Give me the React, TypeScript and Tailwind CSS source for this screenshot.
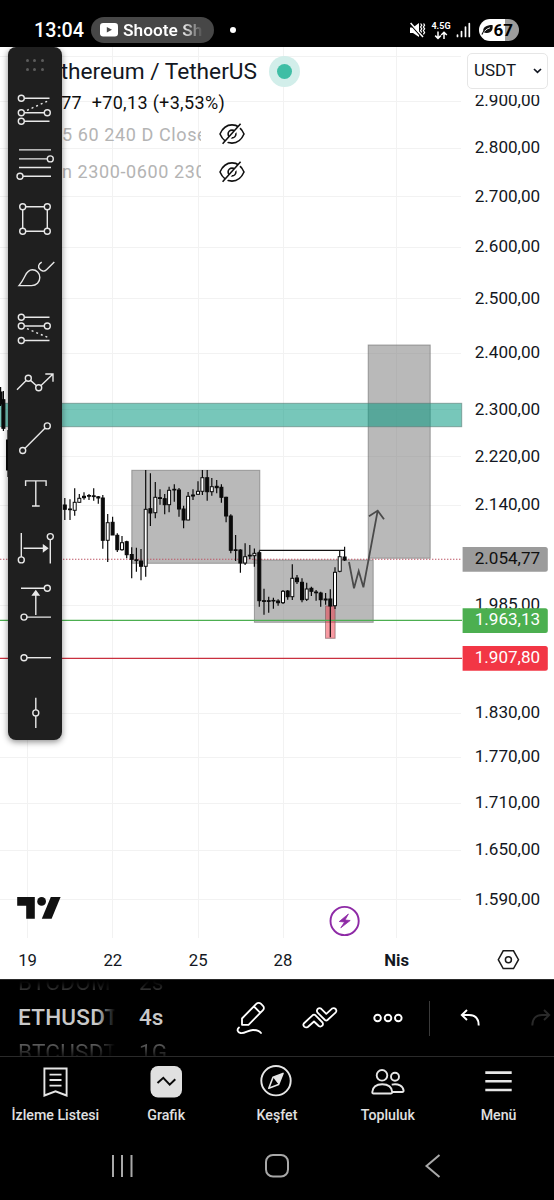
import type { ReactNode } from "react";

// [center x, high, open/close top, open/close bottom, low, rising]
type Candle = [number, number, number, number, number, boolean];

const candles: Candle[] = [
  [0.6, 387, 392, 404, 406, false],
  [3.4, 391, 399.7, 428.3, 431, false],
  [8, 430, 440, 470, 477, false],
  [64.8, 498, 505, 509.3, 520, false],
  [70, 499.3, 509, 509.7, 520, false],
  [74.7, 488.3, 502.3, 510.3, 515.7, true],
  [79.3, 494, 498.3, 502.3, 502.7, true],
  [84, 492.3, 496.3, 497.7, 499.7, false],
  [89, 494, 495.5, 496.2, 500, false],
  [93.7, 488.3, 495.8, 496.6, 500.7, false],
  [98.3, 496, 496.8, 498, 503.7, false],
  [102.8, 495, 498, 540.3, 548.7, false],
  [107.7, 514, 522.7, 540.3, 562, true],
  [112.6, 516.7, 522.3, 535, 535, false],
  [117.3, 533.3, 535.3, 549.7, 552, false],
  [122, 536, 542.7, 549.7, 550.7, true],
  [126.7, 540.7, 541.7, 554.7, 558.3, false],
  [131.7, 547.3, 554.5, 559.3, 578.3, false],
  [136.4, 547.7, 559.8, 560.6, 571.7, false],
  [141, 549, 561, 566.3, 580.3, false],
  [145.7, 470, 509.3, 566.3, 576.7, true],
  [150.4, 473.3, 508.7, 513, 526, false],
  [155.3, 482, 497.3, 512.7, 518.3, true],
  [160, 489.3, 497.7, 498.5, 504.7, false],
  [164.7, 494, 498.7, 504.7, 514.3, false],
  [169.1, 486.7, 490.3, 504.7, 512.3, true],
  [174.3, 484.3, 489.3, 490, 501.7, false],
  [179, 488, 490, 509, 516.7, false],
  [183.6, 505.7, 509, 520, 528.3, false],
  [188.1, 492, 496.3, 520, 520.3, true],
  [193, 489.3, 495, 496, 500, false],
  [198, 481.3, 491.3, 494.3, 495, true],
  [202.4, 470, 477.7, 491.3, 495, true],
  [207.2, 470, 477.7, 491.7, 500.7, false],
  [211.8, 478, 486.7, 491.7, 495.7, true],
  [216.7, 480, 486.3, 487.7, 493.3, false],
  [221.4, 484.3, 487.3, 497.3, 502.7, false],
  [226.1, 496.7, 497.3, 516, 522.3, false],
  [230.8, 514.3, 516, 550.3, 553.3, false],
  [235.6, 535, 549.8, 550.5, 561, false],
  [240.4, 549.3, 550, 563, 572.7, false],
  [245.1, 543.3, 556.7, 563, 565, true],
  [249.8, 545, 555.2, 556, 559, false],
  [254.4, 548.5, 553.3, 555.7, 566.7, true],
  [259.3, 550.7, 552.7, 600.7, 606.7, false],
  [264, 588.7, 600.7, 601.4, 614.7, false],
  [268.7, 596.7, 600.7, 601.4, 612.7, false],
  [273.4, 597.7, 600.4, 601, 608.7, false],
  [278.1, 599.3, 601, 602.7, 605.7, false],
  [283, 590, 591.3, 602.7, 604, true],
  [287.7, 590, 591, 596.7, 599.7, false],
  [292.3, 564.3, 578.3, 596.7, 600, true],
  [297, 575, 578, 581.7, 584, false],
  [302, 578.3, 582.3, 599.7, 602.3, false],
  [306.7, 582.7, 589, 599.3, 601, true],
  [311.4, 586.7, 588.3, 591.3, 596, false],
  [316.1, 590, 592, 592.8, 600.7, false],
  [320.7, 591.7, 593, 599.7, 606.7, false],
  [325.6, 593, 599, 600, 604.7, false],
  [330.3, 589.3, 599, 606, 637.3, false],
  [335, 567.3, 572.3, 605.7, 609, true],
  [339.7, 550.7, 556.7, 571.3, 572.3, true],
  [344.6, 546.7, 557, 560, 561, false],
];

const priceTicks = [
  { label: "2.900,00", y: 101.5 },
  { label: "2.800,00", y: 148.5 },
  { label: "2.700,00", y: 196.7 },
  { label: "2.600,00", y: 247 },
  { label: "2.500,00", y: 298.8 },
  { label: "2.400,00", y: 353.2 },
  { label: "2.300,00", y: 409.7 },
  { label: "2.220,00", y: 456.7 },
  { label: "2.140,00", y: 505.5 },
  { label: "1.985,00", y: 605.3 },
  { label: "1.830,00", y: 713.2 },
  { label: "1.770,00", y: 757.5 },
  { label: "1.710,00", y: 803 },
  { label: "1.650,00", y: 850.5 },
  { label: "1.590,00", y: 899.8 },
];

const priceTags = [
  { label: "2.054,77", top: 547, fill: "#9b9b9b", color: "#101010" },
  { label: "1.963,13", top: 608.3, fill: "#4caf50", color: "#ffffff" },
  { label: "1.907,80", top: 646, fill: "#f23645", color: "#ffffff" },
];

const timeTicks = [
  { label: "19", x: 27.6 },
  { label: "22", x: 112.8 },
  { label: "25", x: 198.2 },
  { label: "28", x: 283 },
  { label: "Nis", x: 396.6, bold: true },
];

function Chart() {
  return (
    <svg
      viewBox="0 47 554 932"
      width="554"
      height="932"
      className="block font-[Roboto,sans-serif] text-[17.1px]"
    >
      {/* Grid */}
      <g stroke="#f2f2f2" strokeWidth="1">
        <path d="M0 56.5H461" />
        {priceTicks.map((t) => (
          <path key={t.label} d={`M0 ${Math.floor(t.y) + 0.5}H461`} />
        ))}
        {timeTicks.map((t) => (
          <path key={t.label} d={`M${Math.floor(t.x) + 0.5} 47V938`} />
        ))}
      </g>

      {/* Range boxes */}
      <g fill="rgba(115,115,115,0.5)" stroke="rgba(100,100,100,0.55)" strokeWidth="1">
        <rect x="131.8" y="470.3" width="128" height="93" />
        <rect x="254.4" y="560" width="118.8" height="62.3" />
        <rect x="368.2" y="345" width="62" height="213.2" />
      </g>
      <rect
        x="325.5" y="606" width="9.6" height="32.3"
        fill="rgba(242,54,69,0.5)" stroke="rgba(120,90,95,0.6)"
      />
      <rect
        x="-2" y="403.3" width="463.7" height="23.4"
        fill="rgba(8,153,129,0.55)" stroke="rgba(90,120,115,0.6)"
      />

      {/* Price lines */}
      <path d="M0 559.3H462" stroke="#bd5565" strokeWidth="1.1" strokeDasharray="1.4 1.6" />
      <path d="M0 620.4H462" stroke="#4cae50" strokeWidth="1.3" />
      <path d="M0 658.3H462" stroke="#c9303f" strokeWidth="1.3" />

      {/* Candles */}
      {candles.map(([x, high, top, bottom, low, up]) => (
        <g key={x} stroke="#0a0a0a">
          <path d={`M${x} ${high}V${low}`} strokeWidth="1.2" />
          <rect
            x={x - 1.5}
            y={top}
            width="3"
            height={bottom - top}
            fill={up ? "#ffffff" : "#0a0a0a"}
            strokeWidth="1"
          />
        </g>
      ))}

      {/* Projection */}
      <path d="M259.3 550.4H344.8" stroke="#111" strokeWidth="1.3" />
      <path
        d="M349 562L354 588.3L358.7 571L363.4 587.3L377.7 510.6M369 516.2L377.7 510.6L384 519.3"
        fill="none"
        stroke="#4a4a4a"
        strokeWidth="1.8"
      />

      {/* Price scale */}
      <g fill="#131722">
        {priceTicks.map((t) => (
          <text key={t.label} x="474.7" y={t.y + 4.8}>
            {t.label}
          </text>
        ))}
      </g>
      <rect x="466" y="88" width="84" height="7" fill="#ffffff" />
      {priceTags.map((t) => (
        <g key={t.label}>
          <path
            d={`M462.6 ${t.top}H545.3Q547.8 ${t.top} 547.8 ${t.top + 2.5}V${t.top + 22.2}Q547.8 ${t.top + 24.7} 545.3 ${t.top + 24.7}H462.6Z`}
            fill={t.fill}
          />
          <text x="474.7" y={t.top + 17.1} fill={t.color}>
            {t.label}
          </text>
        </g>
      ))}

      {/* Time scale */}
      <g fill="#131722" textAnchor="middle" className="text-[16.7px]">
        {timeTicks.map((t) => (
          <text key={t.label} x={t.x} y="965.6" fontWeight={t.bold ? 700 : 400}>
            {t.label}
          </text>
        ))}
      </g>
      <g fill="none" stroke="#1a1a1a" strokeWidth="1.5">
        <path d="M503.2 950.8H513.5L518.5 959.7L513.5 968.6H503.2L498.3 959.7Z" />
        <circle cx="508.4" cy="959.7" r="3" />
      </g>

      {/* Event marker */}
      <circle cx="344.6" cy="921" r="14.1" fill="#fff" stroke="#8e2aa6" strokeWidth="1.9" />
      <path
        d="M348.4 914L339.3 921.5L344.6 922L340.8 927.8L350.2 920.5L345 920Z"
        fill="#8e2aa6"
        stroke="#8e2aa6"
        strokeWidth="0.8"
        strokeLinejoin="round"
      />

      {/* TradingView mark */}
      <g fill="#111">
        <path d="M17.2 897H34.8V918.8H26.2V905.8H17.2Z" />
        <circle cx="41.6" cy="901.4" r="4.4" />
        <path d="M50.8 897H60.6L51.6 918.8H41.8Z" />
      </g>
    </svg>
  );
}

function StatusBar() {
  return (
    <div className="flex h-[47px] items-start bg-black pt-[17px] text-white">
      <span className="ml-[34px] w-[57px] text-[19.7px] leading-[27px] font-medium">13:04</span>
      <div className="flex h-[26px] w-[123px] items-center rounded-full bg-[#474747] pl-[9px]">
        <svg width="18" height="14" viewBox="0 0 18 14">
          <rect width="18" height="13.4" rx="3.2" fill="#fff" />
          <path d="M6.8 4L12 6.8L6.8 9.6Z" fill="#474747" />
        </svg>
        <span className="ml-[5px] w-[82px] overflow-hidden bg-linear-to-r from-white from-70% to-transparent to-98% bg-clip-text text-[17.3px] leading-[28px] font-semibold whitespace-nowrap text-transparent">
          Shoote Sh
        </span>
      </div>
      <span className="mt-[10px] ml-[16px] size-[6px] rounded-full bg-white" />
      <svg className="mt-[4px] ml-[172px]" width="18" height="18" viewBox="0 0 18 18" fill="none">
        <path d="M2 6.5H5L11 2V16L5 12H2Z" fill="#fff" />
        <path d="M1.5 2.5L13.5 16" stroke="#000" strokeWidth="1.2" />
        <path d="M2.6 2L15 16" stroke="#fff" strokeWidth="1.5" />
        <path d="M12.6 2.5L13.8 4.2L12.6 6L13.8 7.8L12.6 9.6L13.8 11.4M15.6 2.5L16.6 4.2L15.4 6L16.6 7.8L15.4 9.6L16.6 11.4L15.4 13.4" stroke="#fff" strokeWidth="1.2" />
      </svg>
      <div className="mt-[4px] ml-[5px] flex w-[20px] flex-col items-center">
        <span className="text-[9px] leading-[10px] font-bold">4.5G</span>
        <svg width="14" height="9" viewBox="0 0 14 9" fill="none" stroke="#fff" strokeWidth="1.5">
          <path d="M4 0.5V7M1.2 4.6L4 7.4L6.8 4.6M10 8V1.5M7.2 4L10 1.2L12.8 4" />
        </svg>
      </div>
      <svg className="mt-[5px] ml-[5px]" width="16" height="16" viewBox="0 0 16 16" stroke="#fff" strokeWidth="1.7" strokeLinecap="round">
        <path d="M1.5 13V14.4M5.5 9.5V14.4M9.5 5V14.4M13.3 1.5V14.4" />
      </svg>
      <div className="mt-[2px] ml-[6.5px] flex h-[22px] w-[40px] items-center rounded-full bg-linear-to-r from-white from-66% to-[#9c9c9c] to-66% text-black">
        <svg className="ml-[2px]" width="13" height="12" viewBox="0 0 13 12">
          <path d="M11.5 1C12.4 5 10.5 9 6 9C4.5 9 3.4 8.6 2.8 8L1.4 10.8L0.4 10.2L2.2 7C2 3.5 5 1 11.5 1Z" fill="#111" />
          <path d="M3.4 7.4Q6 4.4 9 3.8" stroke="#fff" strokeWidth="0.9" fill="none" />
        </svg>
        <span className="text-[17px] leading-[22px] font-bold">67</span>
      </div>
    </div>
  );
}

function HiddenIcon() {
  return (
    <svg width="26" height="22" viewBox="0 0 26 22" fill="none" stroke="#111" strokeWidth="1.6">
      <path d="M1 11C3.6 5 7.8 1.9 13 1.9S22.4 5 25 11C22.4 17 18.2 20.1 13 20.1S3.6 17 1 11Z" />
      <circle cx="13" cy="11" r="3.9" />
      <path d="M22.8 1.2L4.8 21.6" stroke="#fff" strokeWidth="2.6" />
      <path d="M21.6 0.8L3.6 20.8" />
    </svg>
  );
}

function Legend() {
  return (
    <div className="absolute top-0 left-0 w-[310px] pt-[9px]">
      <div className="flex h-[31px] items-center">
        <div className="w-[257px] pt-[2px] text-right text-[22.7px] whitespace-nowrap text-[#131722]">
          Ethereum / TetherUS
        </div>
        <span className="ml-[12px] flex size-[31px] items-center justify-center rounded-full bg-[#d2eeea]">
          <span className="size-[15px] rounded-full bg-[#3fbea5]" />
        </span>
      </div>
      <div className="w-[225px] pt-px text-right text-[18px] leading-[30px] tracking-[0.33px] whitespace-pre text-[#0f0f0f]">
        {"2.054,77  +70,13 (+3,53%)"}
      </div>
      <div className="-mt-[2.5px]">
        {["5 60 240 D Close", "n 2300-0600 2300"].map((name) => (
          <div key={name} className="flex h-[37.5px] items-center">
            <div className="ml-[62px] w-[139px] overflow-hidden text-[18px] tracking-[0.6px] whitespace-nowrap text-[#b4b4b4]">
              {name}
            </div>
            <span className="ml-[18px]">
              <HiddenIcon />
            </span>
          </div>
        ))}
      </div>
    </div>
  );
}

function Dot({ x, y }: { x: number; y: number }) {
  return <circle cx={x} cy={y} r="3" />;
}

const tools: { name: string; icon: ReactNode }[] = [
  {
    name: "fib-extension",
    icon: (
      <>
        <Dot x={13.3} y={16.3} />
        <Dot x={13.3} y={30.7} />
        <Dot x={39.3} y={30.7} />
        <Dot x={13.3} y={39.3} />
        <path d="M16.3 16.3H41.5M16.3 30.7H36.3M16.3 39.3H41.5" />
        <path d="M19 28.3L40 19" strokeDasharray="2 3" />
      </>
    ),
  },
  {
    name: "fib-retracement",
    icon: (
      <>
        <Dot x={42.3} y={21.9} />
        <Dot x={12} y={39.2} />
        <path d="M11 12.9H43M11 21.9H39.3M11 30.5H43M15 39.2H43" />
      </>
    ),
  },
  {
    name: "rectangle",
    icon: (
      <>
        <Dot x={14.7} y={14.7} />
        <Dot x={39.3} y={14.7} />
        <Dot x={14.7} y={39.3} />
        <Dot x={39.3} y={39.3} />
        <path d="M17.7 14.7H36.3M17.7 39.3H36.3M14.7 17.7V36.3M39.3 17.7V36.3" />
      </>
    ),
  },
  {
    name: "brush",
    icon: (
      <>
        <path d="M11 39.6H23.5C28.5 39.6 31.8 36 31.8 31.5C31.8 27 28.5 23.8 24.3 23.8C20.5 23.8 18.7 26.5 17 30C15 34 14 36.2 11 39.6Z" />
        <path d="M46.3 16L38.5 23.8C36 26.2 33.5 25 31.7 23C29.8 20.8 30.2 18.3 33.7 16.2" />
      </>
    ),
  },
  {
    name: "fib-channel",
    icon: (
      <>
        <Dot x={13.3} y={16.3} />
        <Dot x={13.3} y={25} />
        <Dot x={39.3} y={25} />
        <Dot x={13.3} y={39.5} />
        <path d="M16.3 16.3H41.5M16.3 25H36.3M16.3 39.5H41.5" />
        <path d="M19 27.7L40 36.5" strokeDasharray="2 3" />
      </>
    ),
  },
  {
    name: "path",
    icon: (
      <>
        <Dot x={20.3} y={22.3} />
        <Dot x={30.7} y={31.8} />
        <path d="M9 33.7L18.2 24.4M22.5 24.4L28.5 29.7M32.8 29.7L45 18M37.3 18H45V25.7" />
      </>
    ),
  },
  {
    name: "trend-line",
    icon: (
      <>
        <Dot x={39.3} y={14.9} />
        <Dot x={14.7} y={39.5} />
        <path d="M16.8 37.4L37.2 17" />
      </>
    ),
  },
  {
    name: "text",
    icon: <path d="M17.6 20V14.9H38.1V20M27.8 14.9V40M24 40H31.7" />,
  },
  {
    name: "date-range",
    icon: (
      <>
        <Dot x={13.3} y={39.9} />
        <Dot x={42.3} y={16.6} />
        <path d="M13.3 12.9V36.9M42.3 19.6V43.4M15.5 28.3H37" />
        <path d="M35.5 25.3L39.5 28.3L35.5 31.3Z" fill="#e8e8e8" />
      </>
    ),
  },
  {
    name: "price-range",
    icon: (
      <>
        <Dot x={39.3} y={13.3} />
        <Dot x={16} y={42.1} />
        <path d="M13 13.3H36.3M19 42.1H43M27.8 40V18" />
        <path d="M24.8 20L27.8 16L30.8 20Z" fill="#e8e8e8" />
      </>
    ),
  },
  {
    name: "horizontal-ray",
    icon: (
      <>
        <Dot x={16} y={27.7} />
        <path d="M19 27.7H43" />
      </>
    ),
  },
  {
    name: "vertical-line",
    icon: (
      <>
        <Dot x={27.8} y={27.9} />
        <path d="M27.8 12.8V24.9M27.8 30.9V43" />
      </>
    ),
  },
];

function DrawingToolbox() {
  return (
    <div className="absolute top-0 left-[8px] flex h-[692.5px] w-[54px] flex-col rounded-[8px] bg-[#1f1f1f] shadow-[0_2px_6px_rgba(0,0,0,0.45)]">
      <div className="grid h-[35px] grid-cols-3 content-start gap-x-[4.3px] gap-y-[5.7px] px-[18.2px] pt-[12px]">
        {[0, 1, 2, 3, 4, 5].map((i) => (
          <span key={i} className="size-[3px] rounded-full bg-[#5c5c5c]" />
        ))}
      </div>
      {tools.map((tool) => (
        <svg
          key={tool.name}
          width="54"
          height="54.8"
          viewBox="0 0 54 54.8"
          fill="none"
          stroke="#e8e8e8"
          strokeWidth="1.4"
          className="shrink-0"
        >
          {tool.icon}
        </svg>
      ))}
    </div>
  );
}

function CurrencySelect() {
  return (
    <button
      type="button"
      className="absolute top-[6px] left-[467px] flex h-[36px] w-[81px] items-center justify-between rounded-[5px] border border-[#e6e6e6] bg-white pr-[5px] pl-[6px] text-[17px] text-[#131722]"
    >
      USDT
      <svg width="9" height="6" viewBox="0 0 9 6" fill="none" stroke="#131722" strokeWidth="1.7">
        <path d="M1 1L4.5 4.3L8 1" />
      </svg>
    </button>
  );
}

function Wheel({ items, className }: { items: string[]; className: string }) {
  return (
    <div className={`flex h-full flex-col overflow-hidden leading-[35px] whitespace-nowrap ${className}`}>
      <span className="-mt-[15px] bg-linear-to-b from-black from-35% to-[#7a7a7a] to-100% bg-clip-text text-[22.5px] text-transparent">{items[0]}</span>
      <span className="text-[22.5px] font-medium text-[#c9c9c9]">{items[1]}</span>
      <span className="bg-linear-to-b from-[#6a6a6a] from-20% to-black to-85% bg-clip-text text-[22.5px] text-transparent">{items[2]}</span>
    </div>
  );
}

function BottomToolbar() {
  return (
    <div className="flex h-[78px] items-center overflow-hidden border-y border-[#2a2a2a] bg-black">
      <div className="relative ml-[18px] h-full w-[97px]">
        <Wheel items={["BTCDOM", "ETHUSDT", "BTCUSDT"]} className="w-[97px] tracking-[0.25px]" />
        <div className="absolute top-0 right-0 h-full w-[18px] bg-linear-to-r from-transparent to-black" />
      </div>
      <Wheel items={["2s", "4s", "1G"]} className="ml-[24px] w-[30px]" />
      <svg className="ml-[67px]" width="30" height="34" viewBox="0 0 30 34" fill="none" stroke="#fff" strokeWidth="1.8" strokeLinejoin="round" strokeLinecap="round">
        <path d="M6 17.5L20.5 2.7C21.7 1.5 23.6 1.5 24.8 2.7L27 4.9C28.2 6.1 28.2 8 27 9.2L12.5 23.8H6ZM18 5.5L24.3 11.8" />
        <path d="M3 26.5C0.5 28.5 1.5 31.5 4.5 32C9 32.8 12 29 17 29C21 29 23.5 30 25 32" />
      </svg>
      <svg className="ml-[36px]" width="36" height="24" viewBox="0 0 36 24" fill="none" stroke="#fff" strokeWidth="1.8" strokeLinejoin="round" strokeLinecap="round">
        <path d="M1.8 17.5L10.5 9.3Q12 8 13.5 9.3L20.5 16.5Q21.5 18.2 20.3 19.7Q18.6 21.3 16.8 20L12 15.5L5.8 21Q3.8 22 2.2 20.6Q0.7 19 1.8 17.5Z" />
        <path d="M15.6 3Q17.5 1.3 19.3 2.8L24.3 7.8L30 2.6Q32 1.4 33.7 3Q35 4.8 33.8 6.3L25.5 14Q24.3 15 23 14L15.6 6.7Q14.2 4.8 15.6 3Z" />
      </svg>
      <svg className="ml-[35px]" width="30" height="10" viewBox="0 0 30 10" fill="none" stroke="#fff" strokeWidth="1.9">
        <circle cx="4.6" cy="5" r="3.3" />
        <circle cx="15" cy="5" r="3.3" />
        <circle cx="25.3" cy="5" r="3.3" />
      </svg>
      <span className="ml-[26px] h-[35px] w-px bg-[#3a3a3a]" />
      <svg className="ml-[30px] shrink-0" width="20" height="18" viewBox="0 0 20 18" fill="none" stroke="#fff" strokeWidth="1.9">
        <path d="M7 1L1.8 6L7 11M1.8 6H9C15 6 18.7 9.5 18.7 16.5" />
      </svg>
      <svg className="ml-[51px] shrink-0" width="20" height="18" viewBox="0 0 20 18" fill="none" stroke="#2a2a2a" strokeWidth="1.9">
        <path d="M13 1L18.2 6L13 11M18.2 6H11C5 6 1.3 9.5 1.3 16.5" />
      </svg>
    </div>
  );
}

const tabs: { label: string; icon: ReactNode }[] = [
  {
    label: "İzleme Listesi",
    icon: (
      <g fill="none" stroke="#e6e6e6" strokeWidth="1.9">
        <path d="M5.4 3.5H27.6V30.5L16.5 26.3L5.4 30.5Z" />
        <path d="M10.5 9.6H22.5M10.5 15H22.5M10.5 20.6H22.5" />
      </g>
    ),
  },
  {
    label: "Grafik",
    icon: (
      <>
        <rect x="0.5" y="1" width="31.5" height="31.5" rx="7.5" fill="#e0e0e0" />
        <path d="M7.5 18L13.3 12.8L19.7 19.6L25.3 14.2" fill="none" stroke="#0a0a0a" strokeWidth="2" />
      </>
    ),
  },
  {
    label: "Keşfet",
    icon: (
      <g transform="translate(0 -0.8)">
        <circle cx="16" cy="16.5" r="14.7" fill="none" stroke="#e6e6e6" strokeWidth="1.9" />
        <path d="M23 9.2L18.6 20.3L8.8 24L13 13Z" fill="none" stroke="#e6e6e6" strokeWidth="1.6" strokeLinejoin="round" />
        <path d="M23 9.2L18.6 20.3L13 13Z" fill="#e6e6e6" />
      </g>
    ),
  },
  {
    label: "Topluluk",
    icon: (
      <g fill="none" stroke="#e6e6e6" strokeWidth="1.9">
        <circle cx="11" cy="10.3" r="5.3" />
        <circle cx="24" cy="11.7" r="4" />
        <path d="M2.5 28.5Q1.2 28.5 1.3 27C1.8 21.8 5.5 19.3 11.2 19.3S20.7 21.8 21.2 27Q21.2 28.5 20 28.5Z" />
        <path d="M20.7 19.6C27.5 18.3 32 21 32.6 25.5Q32.7 27 31.2 27H21.2" />
      </g>
    ),
  },
  {
    label: "Menü",
    icon: (
      <path d="M3.3 7.6H29.7M3.3 16.3H29.7M3.3 25H29.7" stroke="#e6e6e6" strokeWidth="2.6" />
    ),
  },
];

function TabBar() {
  return (
    <div className="grid h-[75px] grid-cols-5 bg-black pt-[8px]">
      {tabs.map((tab) => (
        <div key={tab.label} className="flex flex-col items-center">
          <svg width="33" height="33" viewBox="0 0 33 33" overflow="visible">
            {tab.icon}
          </svg>
          <span className="mt-[8px] text-[14.2px] leading-[18px] font-medium whitespace-nowrap text-[#e0e0e0]">
            {tab.label}
          </span>
        </div>
      ))}
    </div>
  );
}

function SystemNav() {
  return (
    <div className="flex h-[68px] items-center bg-black pb-px pl-[111px]">
      <svg width="22" height="22" viewBox="0 0 22 22" stroke="#a8a8a8" strokeWidth="2">
        <path d="M2 0V22M11 0V22M20.5 0V22" />
      </svg>
      <svg className="ml-[131px]" width="26" height="24" viewBox="0 0 26 24" fill="none" stroke="#a8a8a8" strokeWidth="2">
        <rect x="2" y="1" width="22" height="21.5" rx="7" />
      </svg>
      <svg className="ml-[133px]" width="18" height="24" viewBox="0 0 18 24" fill="none" stroke="#a8a8a8" strokeWidth="2">
        <path d="M16.5 1L3.5 12L16.5 23" />
      </svg>
    </div>
  );
}

export default function App() {
  return (
    <div className="flex h-[1200px] w-[554px] flex-col overflow-hidden bg-black font-[Roboto,sans-serif]">
      <StatusBar />
      <div className="relative h-[932px] bg-white">
        <Chart />
        <Legend />
        <CurrencySelect />
        <DrawingToolbox />
      </div>
      <BottomToolbar />
      <TabBar />
      <SystemNav />
    </div>
  );
}
